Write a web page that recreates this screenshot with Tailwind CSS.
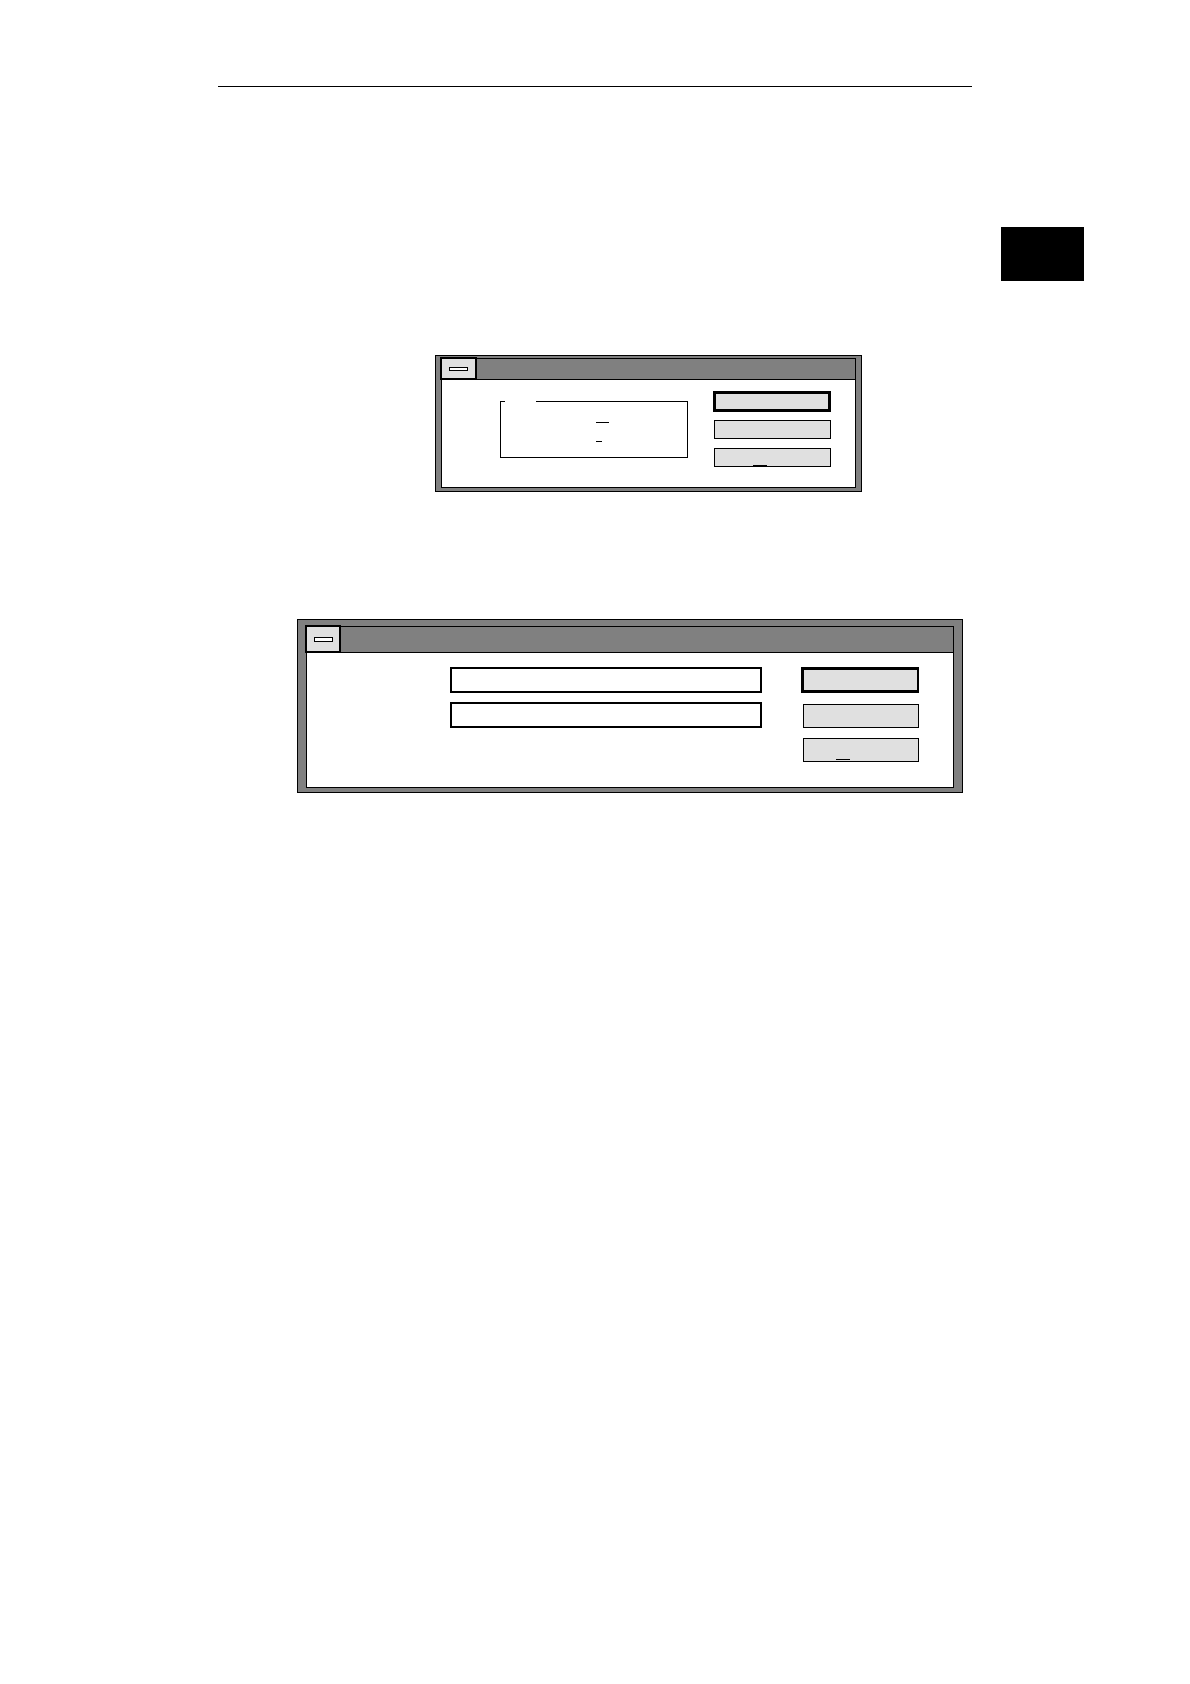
<!DOCTYPE html>
<html lang="en">
<head>
    <meta charset="UTF-8">
    <meta name="viewport" content="width=device-width, initial-scale=1.0">
    <title>Dialogs</title>
    <script src="https://cdn.jsdelivr.net/npm/@tailwindcss/browser@4"></script>
</head>
<body class="bg-white text-black font-['Liberation_Sans',sans-serif]">

    <!-- Header rule -->
    <header class="mx-[218px] pt-[86px]">
        <hr class="border-t border-black">
    </header>

    <!-- Chapter tab -->
    <aside class="flex justify-end mt-[140px] mr-[106px]">
        <div class="w-[83px] h-[54px] bg-black"></div>
    </aside>

    <main class="mx-[218px]">

        <!-- Option dialog -->
        <section class="mt-[74px] ml-[217px] mr-[110px] border border-black bg-[#808080] px-[5px] pt-[2px] pb-[3px]">
            <div class="border border-black bg-white">
                <div class="flex items-start h-[21px] border-b border-black bg-[#808080]">
                    <button type="button" aria-label="Menu" class="flex items-center justify-center -m-[2px] w-[37px] h-[23px] border-2 border-black bg-[#e0e0e0]">
                        <span class="w-[19px] h-1 border border-black bg-white"></span>
                    </button>
                </div>
                <form class="flex pl-[58px] pr-6 pb-5">
                    <fieldset class="flex-1 mt-[21px] h-[57px] border border-black">
                        <legend aria-label="Options" class="ml-1 w-[31px] h-px"></legend>
                        <div class="flex flex-col gap-[18px] pt-5 pl-[95px]">
                            <span class="w-[13px] h-px bg-black"></span>
                            <span class="w-[6px] h-px bg-black"></span>
                        </div>
                    </fieldset>
                    <div class="flex flex-col items-end w-[118px] mt-[11px] ml-[25px]">
                        <button type="button" aria-label="OK" class="w-[118px] h-[21px] border-3 border-black bg-[#e0e0e0]"></button>
                        <button type="button" aria-label="Cancel" class="mt-2 w-[117px] h-[19px] border border-black bg-[#e0e0e0]"></button>
                        <button type="button" aria-label="Help" class="flex items-end mt-[9px] w-[117px] h-[19px] pl-[38px] border border-black bg-[#e0e0e0]">
                            <span class="w-[14px] h-px bg-black"></span>
                        </button>
                    </div>
                </form>
            </div>
        </section>

        <!-- Input dialog -->
        <section class="mt-[127px] ml-[79px] mr-[9px] border border-black bg-[#808080] px-2 pt-[6px] pb-1">
            <div class="border border-black bg-white">
                <div class="flex items-start h-[26px] border-b border-black bg-[#808080]">
                    <button type="button" aria-label="Menu" class="flex items-center justify-center -m-[2px] w-[36px] h-[28px] border-2 border-black bg-[#e0e0e0]">
                        <span class="w-[19px] h-[5px] border border-black bg-white"></span>
                    </button>
                </div>
                <form class="flex pt-[14px] pl-[143px] pr-[34px] pb-[25px]">
                    <div class="flex flex-col flex-1 gap-[9px]">
                        <input type="text" aria-label="First value" class="w-full h-[26px] border-2 border-black bg-white px-1 text-sm">
                        <input type="text" aria-label="Second value" class="w-full h-[26px] border-2 border-black bg-white px-1 text-sm">
                    </div>
                    <div class="flex flex-col items-end w-[118px] ml-[39px]">
                        <button type="button" aria-label="OK" class="w-[118px] h-[26px] border-3 border-r-2 border-black bg-[#e0e0e0]"></button>
                        <button type="button" aria-label="Cancel" class="mt-[11px] w-[116px] h-6 border border-black bg-[#e0e0e0]"></button>
                        <button type="button" aria-label="Help" class="flex items-end mt-[10px] w-[116px] h-6 pl-8 pb-[1px] border border-black bg-[#e0e0e0]">
                            <span class="w-[14px] h-px bg-black"></span>
                        </button>
                    </div>
                </form>
            </div>
        </section>

    </main>

</body>
</html>
